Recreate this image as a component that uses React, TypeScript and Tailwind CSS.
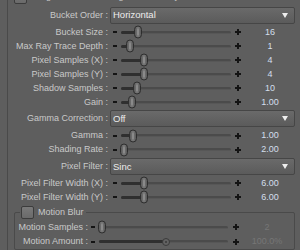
import React from "react";

type SliderRow = { label: string; value: string; pos: number };

function Minus() {
  return <div className="w-[4px] h-[2px] bg-[#141414] shrink-0" />;
}

function Plus() {
  return (
    <svg width="6" height="6" viewBox="0 0 6 6" className="shrink-0">
      <path d="M2 0h2v6H2zM0 2h6v2H0z" fill="#141414" />
    </svg>
  );
}

function Handle({ round }: { round?: boolean }) {
  if (round) {
    return (
      <div className="w-[8px] h-[8px] rounded-full border border-[#3a3a3a] bg-[#626262] flex items-center justify-center">
        <div className="w-[2px] h-[2px] rounded-full bg-[#3a3a3a]" />
      </div>
    );
  }
  return (
    <div className="w-[8px] h-[13px] rounded-full border border-[#2e2e2e] bg-gradient-to-r from-[#5a5a5a] via-[#7a7a7a] to-[#5a5a5a] flex items-center justify-center">
      <div className="w-[2px] h-[7px] rounded-full bg-[#8a8a8a]" />
    </div>
  );
}

function Track({ width, pos, round }: { width: number; pos: number; round?: boolean }) {
  return (
    <div className="relative h-[13px] shrink-0 flex items-center" style={{ width }}>
      <div className="w-full h-[3px] rounded-full bg-[#4b4b4b] border-b border-[#575757]" />
      <div
        className="absolute left-0 top-[5px] h-[3px] rounded-full bg-[#2f2f2f]"
        style={{ width: pos }}
      />
      <div
        className="absolute top-1/2 -translate-y-1/2 -translate-x-1/2"
        style={{ left: pos }}
      >
        <Handle round={round} />
      </div>
    </div>
  );
}

function Slider({ label, value, pos }: SliderRow) {
  return (
    <div className="flex items-center h-[14.4px]">
      <div className="w-[100px] text-right text-[#c9c9c9] whitespace-nowrap">{label} :</div>
      <div className="ml-[5px]">
        <Minus />
      </div>
      <div className="ml-[4px]">
        <Track width={110} pos={pos - 121} />
      </div>
      <div className="ml-[4px]">
        <Plus />
      </div>
      <div className="ml-[4px] w-[50px] text-center text-[#d3deec]">{value}</div>
    </div>
  );
}

function Dropdown({ label, value }: { label: string; value: string }) {
  return (
    <div className="flex items-center h-[20px]">
      <div className="w-[100px] text-right text-[#c9c9c9] whitespace-nowrap">{label} :</div>
      <div className="ml-[2px] w-[185px] h-[17px] rounded-[2px] border border-[#464646] bg-gradient-to-b from-[#6a6a6a] to-[#5b5b5b] flex items-center pl-[2px] pr-[6px]">
        <span className="text-[9.5px] text-[#ececec] flex-1">{value}</span>
        <svg width="6" height="5" viewBox="0 0 6 5">
          <path d="M0 0h6L3 5z" fill="#eeeeee" />
        </svg>
      </div>
    </div>
  );
}

function Checkbox() {
  return (
    <div className="w-[13px] h-[13px] rounded-[2px] border border-[#3c3c3c] bg-gradient-to-b from-[#7a7a7a] to-[#6a6a6a] shrink-0" />
  );
}

function GroupSlider({ label, value, pos, round }: SliderRow & { round?: boolean }) {
  return (
    <div className="flex items-center h-[14.4px]">
      <div className="w-[73px] text-right text-[#c9c9c9] whitespace-nowrap">{label} :</div>
      <div className="ml-[3px]">
        <Minus />
      </div>
      <div className="ml-[4px]">
        <Track width={129} pos={pos - 99} round={round} />
      </div>
      <div className="ml-[5px]">
        <Plus />
      </div>
      <div className="ml-[3px] w-[50px] text-center text-[#767676] whitespace-nowrap">{value}</div>
    </div>
  );
}

const rows1: SliderRow[] = [
  { label: "Bucket Size", value: "16", pos: 137.5 },
  { label: "Max Ray Trace Depth", value: "1", pos: 129.5 },
  { label: "Pixel Samples (X)", value: "4", pos: 144 },
  { label: "Pixel Samples (Y)", value: "4", pos: 144 },
  { label: "Shadow Samples", value: "10", pos: 137 },
  { label: "Gain", value: "1.00", pos: 132 },
];

const rows2: SliderRow[] = [
  { label: "Gamma", value: "1.00", pos: 133 },
  { label: "Shading Rate", value: "2.00", pos: 124 },
];

const rows3: SliderRow[] = [
  { label: "Pixel Filter Width (X)", value: "6.00", pos: 144 },
  { label: "Pixel Filter Width (Y)", value: "6.00", pos: 144 },
];

export default function App() {
  return (
    <div className="w-[300px] h-[250px] overflow-hidden bg-[#5e5e5e] font-['Liberation_Sans',Arial,sans-serif] text-[9px] leading-none">
      <div className="ml-[7px] border-l border-[#4a4a4a] h-full flex flex-col">
        <div className="h-[5px] flex items-end">
          <div className="ml-[6px] mb-[1px]">
            <Checkbox />
          </div>
          <div className="ml-[5px] mb-[4px] text-[9px] leading-none text-[#c9c9c9] whitespace-nowrap">
            Progressive Rendering Preview Only
          </div>
        </div>
        <div className="h-[20.5px] flex items-center">
          <div className="w-full">
            <Dropdown label="Bucket Order" value="Horizontal" />
          </div>
        </div>
        {rows1.map((r) => (
          <Slider key={r.label} {...r} />
        ))}
        <Dropdown label="Gamma Correction" value="Off" />
        {rows2.map((r) => (
          <Slider key={r.label} {...r} />
        ))}
        <Dropdown label="Pixel Filter" value="Sinc" />
        {rows3.map((r) => (
          <Slider key={r.label} {...r} />
        ))}
        <fieldset className="ml-[6px] w-[281px] border border-[#4a4a4a] rounded-[2px] min-w-0">
          <legend className="ml-[5px] pl-[1px] pr-[2px] h-[16px] flex items-center">
            <Checkbox />
            <span className="ml-[4px] text-[#c9c9c9]">Motion Blur</span>
          </legend>
          <GroupSlider label="Motion Samples" value="2" pos={102} />
          <GroupSlider label="Motion Amount" value="100.0%" pos={166} round />
        </fieldset>
      </div>
    </div>
  );
}
